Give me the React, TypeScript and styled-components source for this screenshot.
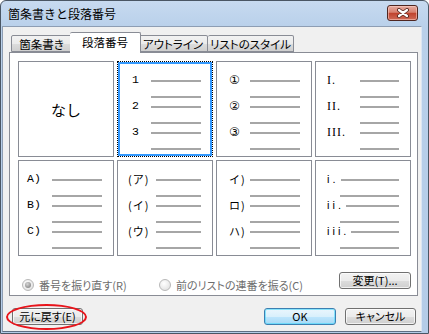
import React from 'react';
import styled, { createGlobalStyle } from 'styled-components';

const Global = createGlobalStyle`
  html, body { margin: 0; padding: 0; background: #ffffff; }
  body {
    font-family: "Noto Sans CJK JP", "Noto Sans", sans-serif;
    font-feature-settings: "palt";
  }
  * { box-sizing: border-box; }
`;

const Window = styled.div`
  width: 429px;
  height: 334px;
  display: flex;
  flex-direction: column;
  background: linear-gradient(180deg, #c7daf0 0px, #b9d0ea 26px, #b4cce8 100%);
  border: 1px solid #4a5664;
  border-radius: 6px 6px 0 0;
  overflow: hidden;
  padding: 0 6px 1px 1px;
`;

const TitleBar = styled.div`
  height: 25px;
  flex: none;
  display: flex;
  align-items: center;
  justify-content: space-between;
  padding: 0 4px 3px 6px;
`;

const Title = styled.div`
  font-size: 12px;
  color: #000;
  font-feature-settings: normal;
  padding-top: 2px;
`;

const CloseBtn = styled.div`
  width: 31px;
  height: 16px;
  margin-top: 1px;
  border: 1px solid #4f2620;
  border-radius: 3px;
  background: linear-gradient(180deg, #e6aca1 0%, #d7806f 45%, #c0432e 52%, #cf6b58 100%);
  box-shadow: inset 0 0 0 1px rgba(255, 210, 200, 0.55);
  display: flex;
  align-items: center;
  justify-content: center;
`;

const Client = styled.div`
  flex: 1;
  background: #f0f0f0;
  border: 1px solid #8d9db3;
  border-right-color: #dbe6f3;
  border-bottom-color: #5f6f83;
  display: flex;
  flex-direction: column;
  padding: 5px 5px 0 6px;
`;

const TabStrip = styled.div`
  display: flex;
  align-items: flex-end;
  height: 20px;
  padding-left: 2px;
  position: relative;
  z-index: 1;
`;

const Tab = styled.div<{ $w: number; $active?: boolean }>`
  width: ${(p) => p.$w}px;
  height: ${(p) => (p.$active ? 21 : 17)}px;
  margin: 0 ${(p) => (p.$active ? -2 : 0)}px ${(p) => (p.$active ? -1 : 0)}px;
  border: 1px solid #898c95;
  border-bottom: ${(p) => (p.$active ? 'none' : '1px solid #898c95')};
  border-radius: 2px 2px 0 0;
  background: ${(p) =>
    p.$active ? '#ffffff' : 'linear-gradient(180deg, #f2f2f2 0%, #ebebeb 50%, #dddddd 51%, #cfcfcf 100%)'};
  font-size: 11.5px;
  white-space: nowrap;
  color: #000;
  display: flex;
  align-items: center;
  justify-content: center;
  padding-bottom: ${(p) => (p.$active ? 2 : 0)}px;
  position: relative;
  z-index: ${(p) => (p.$active ? 2 : 1)};
  & + & {
    border-left-width: 0;
  }
`;

const Panel = styled.div`
  width: 409px;
  height: 244px;
  background: #ffffff;
  border: 1px solid #898c95;
  padding: 8px 6px 0 8px;
  display: flex;
  flex-direction: column;
`;

const Grid = styled.div`
  display: grid;
  grid-template-columns: repeat(4, 96px);
  grid-auto-rows: 96px;
  gap: 3px;
`;

const Cell = styled.div<{ $selected?: boolean }>`
  background: #fff;
  border: 1px ${(p) => (p.$selected ? 'dotted #000' : 'solid #898c95')};
  box-shadow: ${(p) => (p.$selected ? 'inset 0 0 0 2px #3399ff' : 'none')};
  padding-top: 11px;
  display: flex;
  flex-direction: column;
`;

const NoneCell = styled(Cell)`
  align-items: center;
  justify-content: center;
  padding: 0;
  font-size: 15px;
  font-feature-settings: normal;
  color: #000;
`;

const Item = styled.div`
  height: 26px;
  display: flex;
  flex-direction: column;
`;

const ItemHead = styled.div<{ $x: number }>`
  height: 14px;
  display: flex;
  align-items: center;
  padding-left: ${(p) => p.$x - 1}px;
  padding-right: 11px;
`;

type Face = 'mono' | 'serif' | 'kana' | 'circ' | 'small';

const Label = styled.span<{ $min: number; $face: Face; $gap: number }>`
  min-width: ${(p) => p.$min}px;
  margin-right: ${(p) => p.$gap}px;
  white-space: pre;
  color: #000;
  line-height: 14px;
  font-feature-settings: normal;
  font-family: ${(p) =>
    p.$face === 'serif'
      ? '"Liberation Serif", serif'
      : p.$face === 'mono'
      ? '"Liberation Mono", monospace'
      : p.$face === 'small'
      ? '"Liberation Sans", sans-serif'
      : p.$face === 'circ'
      ? '"DejaVu Sans", "Noto Sans CJK JP", sans-serif'
      : '"Noto Sans CJK JP", sans-serif'};
  font-size: ${(p) =>
    p.$face === 'serif' ? 12 : p.$face === 'mono' ? 11.5 : p.$face === 'circ' ? 12 : 11}px;
  letter-spacing: ${(p) =>
    p.$face === 'serif' ? 1 : p.$face === 'small' ? 3 : p.$face === 'kana' ? 1 : 0}px;
`;

const Line = styled.div`
  flex: 1;
  height: 2px;
  margin-top: 2px;
  background: #a6a6a6;
`;

const SubLine = styled.div<{ $x: number }>`
  height: 2px;
  margin: 9px 11px 0 ${(p) => p.$x - 1}px;
  background: #a6a6a6;
`;

const OptionRow = styled.div`
  margin-top: 18px;
  display: flex;
  align-items: center;
  height: 16px;
`;

const RadioLabel = styled.div<{ $w: number }>`
  width: ${(p) => p.$w}px;
  display: flex;
  align-items: center;
  gap: 5px;
  padding-top: 6px;
  font-size: 11px;
  white-space: nowrap;
  color: #6d6d6d;
`;

const Radio = styled.span<{ $checked?: boolean }>`
  width: 12px;
  height: 12px;
  flex: none;
  border-radius: 50%;
  border: 1px solid #b8b8b8;
  background: radial-gradient(circle at 40% 35%, #ffffff 0%, #e6e6e6 70%, #d6d6d6 100%);
  display: inline-flex;
  align-items: center;
  justify-content: center;
  &::after {
    content: '';
    width: 6px;
    height: 6px;
    border-radius: 50%;
    background: ${(p) =>
      p.$checked ? 'radial-gradient(circle at 40% 35%, #d6d6d6 0%, #9a9a9a 60%, #7d7d7d 100%)' : 'transparent'};
  }
`;

const Button = styled.div<{ $w: number; $default?: boolean }>`
  width: ${(p) => p.$w}px;
  height: 17px;
  flex: none;
  border: 1px solid ${(p) => (p.$default ? '#3c7fb1' : '#707070')};
  border-radius: 3px;
  background: ${(p) =>
    p.$default
      ? 'linear-gradient(180deg, #eaf6fd 0%, #d9f0fc 50%, #bee6fd 51%, #a7d9f5 100%)'
      : 'linear-gradient(180deg, #f2f2f2 0%, #ebebeb 50%, #dddddd 51%, #cfcfcf 100%)'};
  box-shadow: inset 0 0 0 1px ${(p) => (p.$default ? 'rgba(72, 216, 251, 0.6)' : 'rgba(255,255,255,0.7)')};
  font-size: 11px;
  white-space: nowrap;
  color: #000;
  display: flex;
  align-items: center;
  justify-content: center;
  line-height: 1;
`;

const ChangeWrap = styled.div`
  margin-left: auto;
  margin-top: -3px;
`;

const BottomRow = styled.div`
  display: flex;
  align-items: center;
  margin-top: 12px;
  padding-left: 3px;
`;

const ResetWrap = styled.div`
  position: relative;
`;

const Ellipse = styled.div`
  position: absolute;
  left: -6px;
  top: -4px;
  width: 81px;
  height: 26px;
  border: 2px solid #e8141b;
  border-radius: 50%;
  pointer-events: none;
`;

const Spacer = styled.div`
  flex: 1;
`;

const Gap = styled.div<{ $w: number }>`
  width: ${(p) => p.$w}px;
  flex: none;
`;

type CellCfg = {
  labels: string[];
  numX: number;
  lineX: number;
  face: Face;
  tight?: boolean;
};

const cells: CellCfg[] = [
  { labels: ['1', '2', '3'], numX: 15, lineX: 34, face: 'mono' },
  { labels: ['①', '②', '③'], numX: 13, lineX: 34, face: 'circ' },
  { labels: ['I.', 'II.', 'III.'], numX: 12, lineX: 45, face: 'serif' },
  { labels: ['A)', 'B)', 'C)'], numX: 9, lineX: 34, face: 'mono' },
  { labels: ['(ア)', '(イ)', '(ウ)'], numX: 11, lineX: 39, face: 'kana' },
  { labels: ['イ)', 'ロ)', 'ハ)'], numX: 13, lineX: 34, face: 'kana' },
  { labels: ['i.', 'ii.', 'iii.'], numX: 12, lineX: 25, face: 'small', tight: true },
];

function ListCell({ cfg, selected }: { cfg: CellCfg; selected?: boolean }) {
  return (
    <Cell $selected={selected}>
      {cfg.labels.map((l) => (
        <Item key={l}>
          <ItemHead $x={cfg.numX}>
            <Label $face={cfg.face} $min={cfg.tight ? 0 : cfg.lineX - cfg.numX} $gap={cfg.tight ? 2 : 0}>
              {l}
            </Label>
            <Line />
          </ItemHead>
          <SubLine $x={cfg.lineX} />
        </Item>
      ))}
    </Cell>
  );
}

function CloseIcon() {
  return (
    <svg width="14" height="10" viewBox="0 0 14 10">
      <path d="M3 2 L11 8 M11 2 L3 8" stroke="#5a2a22" strokeWidth="4" strokeLinecap="round" />
      <path d="M3 2 L11 8 M11 2 L3 8" stroke="#ffffff" strokeWidth="2.2" strokeLinecap="round" />
    </svg>
  );
}

export default function App() {
  return (
    <>
      <Global />
      <Window>
        <TitleBar>
          <Title>箇条書きと段落番号</Title>
          <CloseBtn>
            <CloseIcon />
          </CloseBtn>
        </TitleBar>
        <Client>
          <TabStrip>
            <Tab $w={61}>箇条書き</Tab>
            <Tab $w={71} $active>
              段落番号
            </Tab>
            <Tab $w={69}>アウトライン</Tab>
            <Tab $w={86}>リストのスタイル</Tab>
          </TabStrip>
          <Panel>
            <Grid>
              <NoneCell>なし</NoneCell>
              <ListCell cfg={cells[0]} selected />
              <ListCell cfg={cells[1]} />
              <ListCell cfg={cells[2]} />
              <ListCell cfg={cells[3]} />
              <ListCell cfg={cells[4]} />
              <ListCell cfg={cells[5]} />
              <ListCell cfg={cells[6]} />
            </Grid>
            <OptionRow>
              <Gap $w={4} />
              <RadioLabel $w={137}>
                <Radio $checked />
                番号を振り直す(R)
              </RadioLabel>
              <RadioLabel $w={160}>
                <Radio />
                前のリストの連番を振る(C)
              </RadioLabel>
              <ChangeWrap>
                <Button $w={72}>変更(T)...</Button>
              </ChangeWrap>
            </OptionRow>
          </Panel>
          <BottomRow>
            <ResetWrap>
              <Button $w={71}>元に戻す(E)</Button>
              <Ellipse />
            </ResetWrap>
            <Spacer />
            <Button $w={72} $default>
              OK
            </Button>
            <Gap $w={9} />
            <Button $w={71}>キャンセル</Button>
          </BottomRow>
        </Client>
      </Window>
    </>
  );
}
